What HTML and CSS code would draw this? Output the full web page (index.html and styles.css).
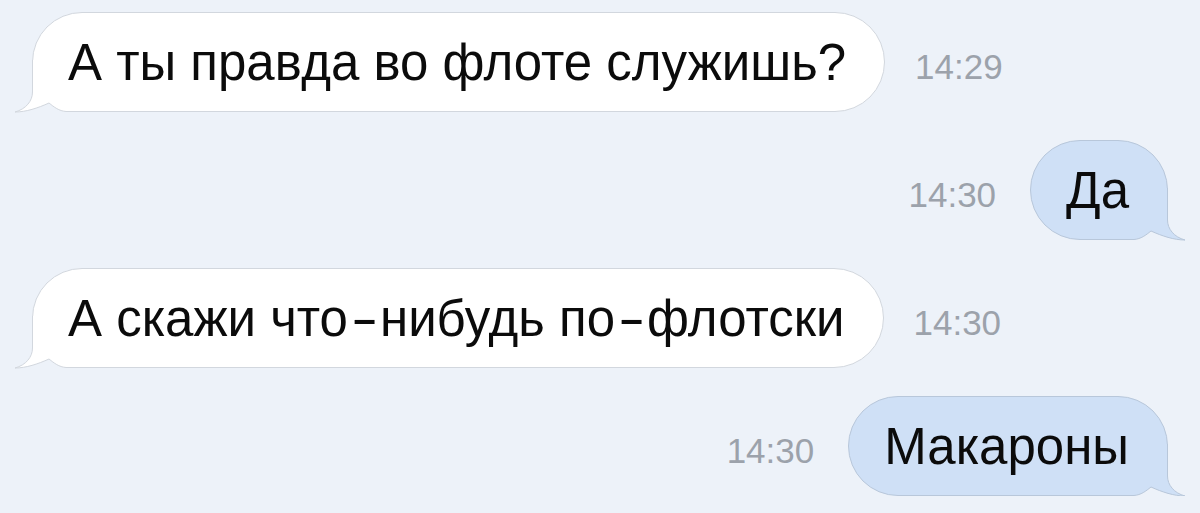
FILE: index.html
```html
<!DOCTYPE html>
<html lang="ru">
<head>
  <meta charset="UTF-8">
  <meta name="viewport" content="width=device-width, initial-scale=1.0">
  <title>Чат</title>
  <link rel="stylesheet" href="styles.css">
</head>
<body>
  <div class="chat">
    <div class="row in">
      <div class="bubble">
        <svg class="tail" width="72" height="54" viewBox="0 0 72 54">
          <path class="tail-fill" d="M18.5 0 V32 C18.5 41 12 49 1 52 C12 52 24 48 35 43 C40 47 45 51 52 51.5 H72 V0 Z"/>
          <path class="tail-line" d="M18.5 0 V32 C18.5 41 12 49 1 52 C12 52 24 48 35 43 C40 47 45 51 52 51.5 H72"/>
        </svg>
        <span class="text">А ты правда во флоте служишь?</span>
      </div>
      <span class="time">14:29</span>
    </div>

    <div class="row out">
      <span class="time">14:30</span>
      <div class="bubble">
        <svg class="tail" width="72" height="54" viewBox="0 0 72 54">
          <path class="tail-fill" d="M18.5 0 V32 C18.5 41 12 49 1 52 C12 52 24 48 35 43 C40 47 45 51 52 51.5 H72 V0 Z"/>
          <path class="tail-line" d="M18.5 0 V32 C18.5 41 12 49 1 52 C12 52 24 48 35 43 C40 47 45 51 52 51.5 H72"/>
        </svg>
        <span class="text">Да</span>
      </div>
    </div>

    <div class="row in">
      <div class="bubble">
        <svg class="tail" width="72" height="54" viewBox="0 0 72 54">
          <path class="tail-fill" d="M18.5 0 V32 C18.5 41 12 49 1 52 C12 52 24 48 35 43 C40 47 45 51 52 51.5 H72 V0 Z"/>
          <path class="tail-line" d="M18.5 0 V32 C18.5 41 12 49 1 52 C12 52 24 48 35 43 C40 47 45 51 52 51.5 H72"/>
        </svg>
        <span class="text">А скажи что<span class="hy">-</span>нибудь по<span class="hy">-</span>флотски</span>
      </div>
      <span class="time">14:30</span>
    </div>

    <div class="row out">
      <span class="time">14:30</span>
      <div class="bubble">
        <svg class="tail" width="72" height="54" viewBox="0 0 72 54">
          <path class="tail-fill" d="M18.5 0 V32 C18.5 41 12 49 1 52 C12 52 24 48 35 43 C40 47 45 51 52 51.5 H72 V0 Z"/>
          <path class="tail-line" d="M18.5 0 V32 C18.5 41 12 49 1 52 C12 52 24 48 35 43 C40 47 45 51 52 51.5 H72"/>
        </svg>
        <span class="text">Макароны</span>
      </div>
    </div>
  </div>
</body>
</html>
```

FILE: styles.css
```css
body {
  margin: 0;
  background: #edf2f9;
  font-family: "Liberation Sans", Arial, sans-serif;
  color: #0b0b0b;
}
.chat {
  display: flex;
  flex-direction: column;
  gap: 28px;
  padding: 12px 32px 0;
}
.row {
  display: flex;
  align-items: center;
}
.row.out {
  justify-content: flex-end;
}
.bubble {
  position: relative;
  box-sizing: border-box;
  height: 100px;
  display: flex;
  align-items: center;
  padding: 0 38px 0 35px;
  border: 1px solid;
  border-radius: 50px;
  font-size: 51px;
}
.text {
  position: relative;
  white-space: nowrap;
}
.hy {
  display: inline-block;
  margin: 0 7px 0 8px;
  transform: scaleX(1.6);
}
.in .bubble {
  background: #fff;
  border-color: #d2d7de;
}
.out .bubble {
  background: #cfe0f6;
  border-color: #b8c7da;
}
.tail {
  position: absolute;
  bottom: -3px;
  left: -19px;
}
.out .tail {
  left: auto;
  right: -19px;
  transform: scaleX(-1);
}
.tail-line {
  fill: none;
  stroke-width: 1;
}
.in .tail-fill { fill: #fff; }
.in .tail-line { stroke: #d2d7de; }
.out .tail-fill { fill: #cfe0f6; }
.out .tail-line { stroke: #b8c7da; }
.time {
  font-size: 35px;
  color: #9ca2ab;
  margin-top: 10px;
}
.in .time { margin-left: 30px; }
.out .time { margin-right: 34px; }
```
